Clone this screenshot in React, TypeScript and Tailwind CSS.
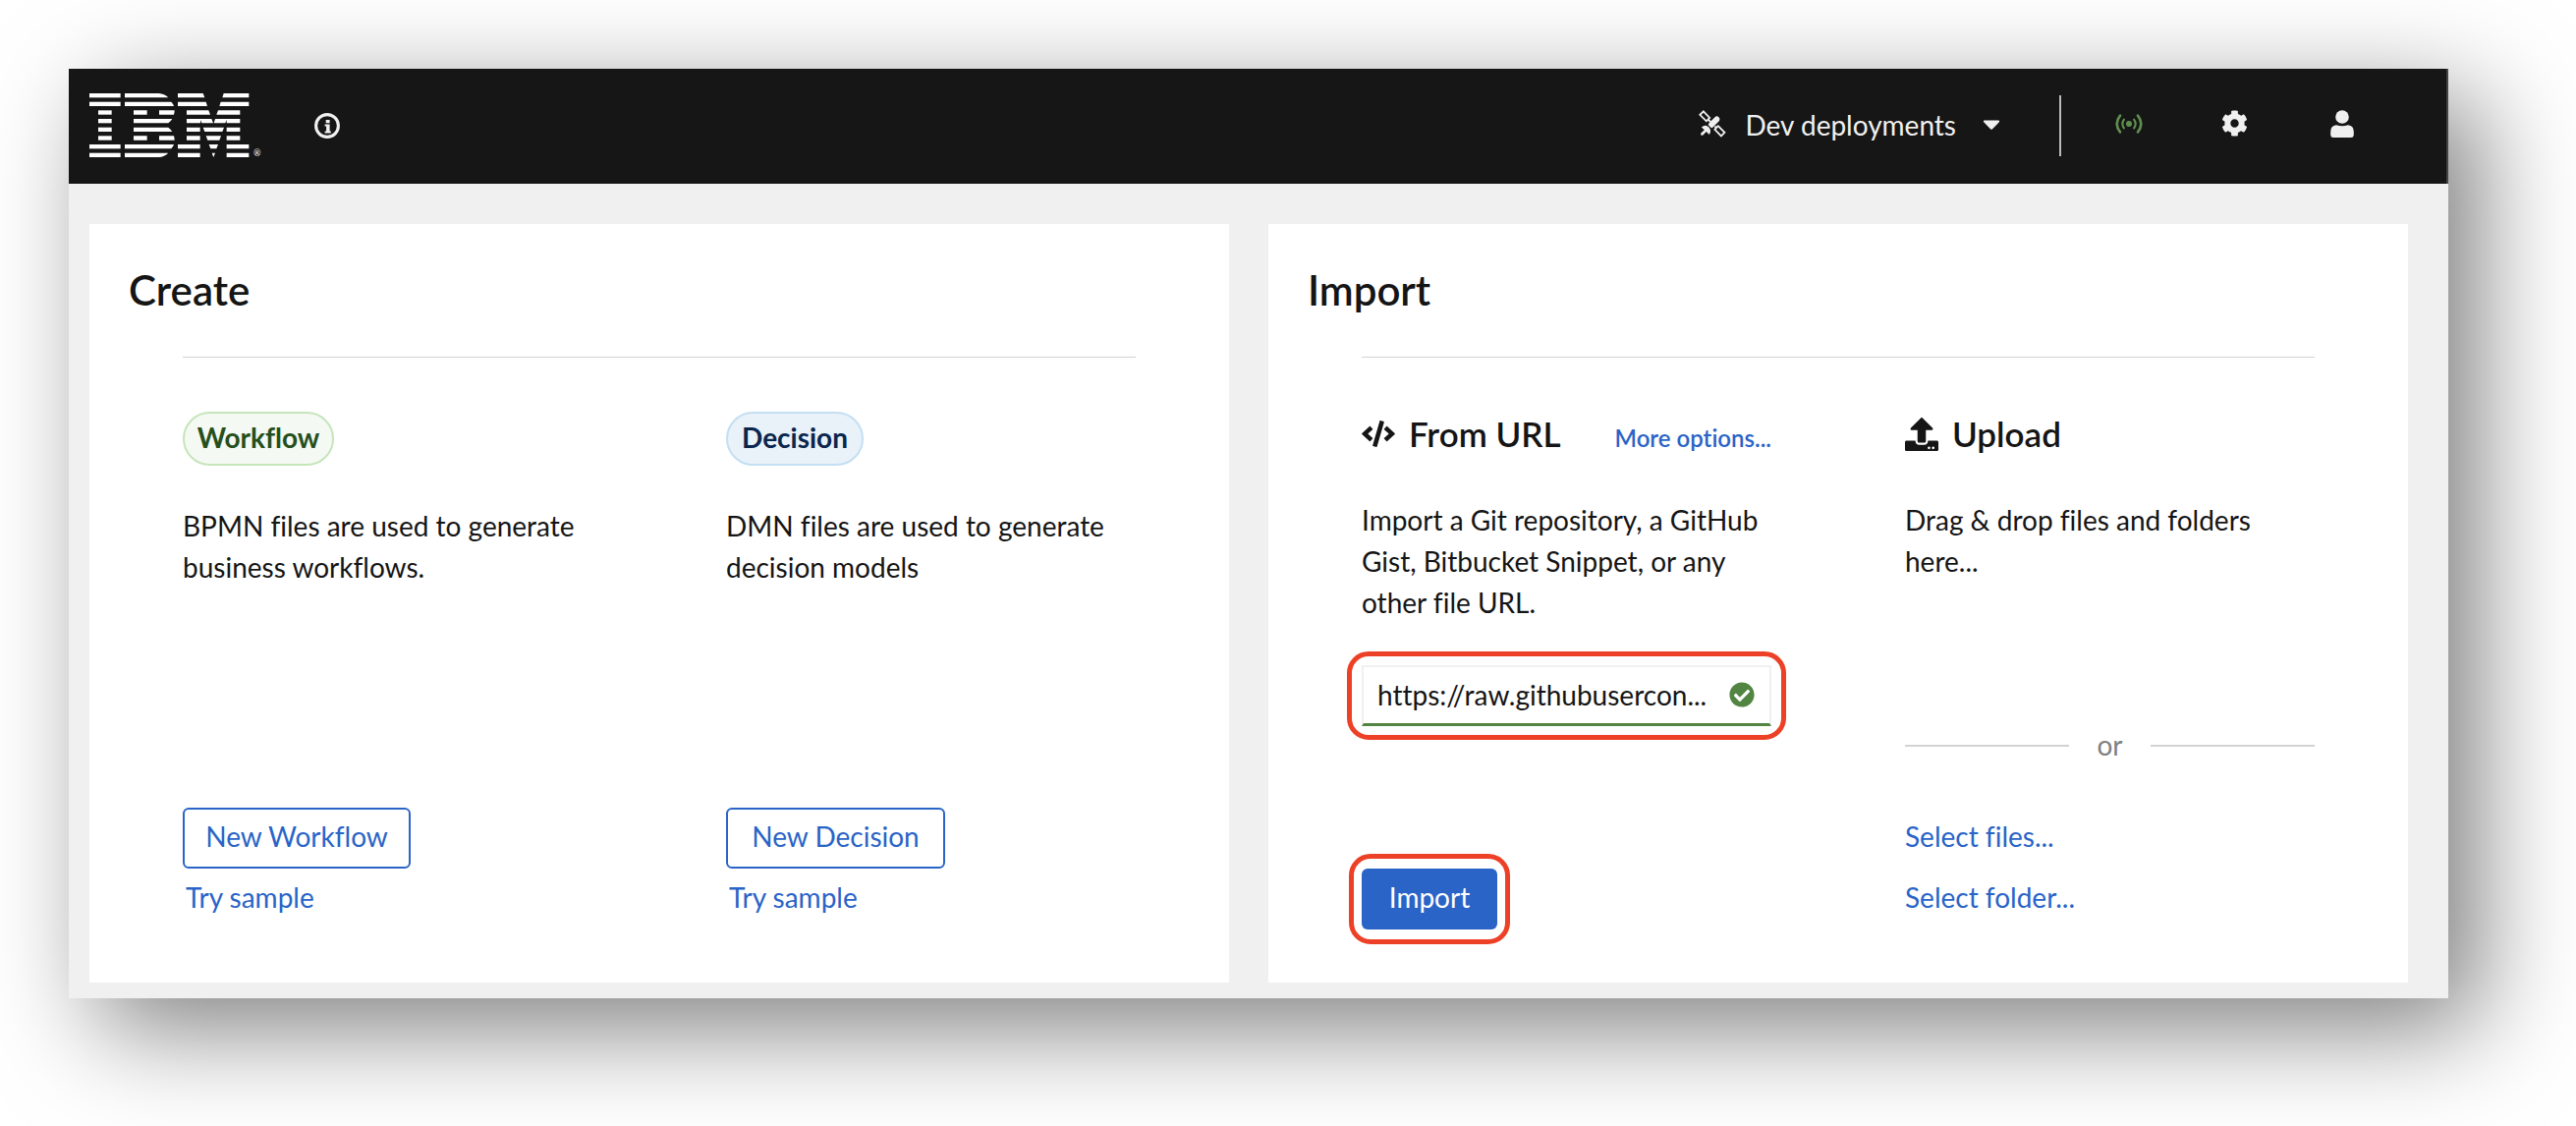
import type { ReactNode } from "react";
import { FaCaretDown, FaCheckCircle, FaCode, FaCog, FaUpload } from "react-icons/fa";

const barY = [105, 131, 157, 183, 209, 235, 261, 287];

function IbmLogo() {
  return (
    <a href="#home" aria-label="IBM home" className="flex items-end gap-1 text-white">
      <svg className="h-[65px] w-[163px]" viewBox="93 105 489 195" fill="currentColor" aria-hidden="true">
        {barY.map((y, i) =>
          i < 2 || i > 5 ? (
            <rect key={y} x="93" y={y} width="95" height="13" />
          ) : (
            <rect key={y} x="120" y={y} width="41" height="13" />
          ),
        )}
        <path d="M201 105H305Q322 106 334 118H201Z" />
        <path d="M201 131H343Q349 137 351 144H201Z" />
        <path d="M228 157H269V170H228ZM306 157H353Q353 164 351 170H306Z" />
        <path d="M228 183H346Q341 191 334 196H228Z" />
        <path d="M228 209H334Q341 214 346 222H228Z" />
        <path d="M228 235H269V248H228ZM306 235H351Q353 241 353 248H306Z" />
        <path d="M201 261H351Q349 268 343 274H201Z" />
        <path d="M201 287H334Q322 299 305 300H201Z" />
        <path d="M363 105H440L445 118H363ZM503 105H580V118H499Z" />
        <path d="M363 131H449L453 144H363ZM494 131H580V144H490Z" />
        <path d="M390 157H457L462 170H390ZM486 157H553V170H481Z" />
        <path d="M390 183H466L471 196H436L432 186V196H390ZM477 183H553V196H512V186L508 196H473Z" />
        <path d="M390 209H431V222H390ZM440 209H504L499 222H445ZM512 209H553V222H512Z" />
        <path d="M390 235H431V248H390ZM449 235H495L490 248H454ZM512 235H553V248H512Z" />
        <path d="M363 261H431V274H363ZM458 261H486L481 274H463ZM512 261H580V274H512Z" />
        <path d="M363 287H431V300H363ZM467 287H477L472 300ZM512 287H580V300H512Z" />
      </svg>
      <span className="text-[9px] leading-[9px]">®</span>
    </a>
  );
}

function InfoIcon() {
  return (
    <svg className="size-[26px]" viewBox="0 0 26 26" aria-hidden="true">
      <circle cx="13" cy="13" r="11.4" fill="none" stroke="currentColor" strokeWidth="3.1" />
      <path fill="currentColor" d="M11.7 7h3.9v3.2h-3.9zM10.6 11.6h5v6.9h1.2v2h-6.2v-2h1.5v-4.9h-1.5z" />
    </svg>
  );
}

function SatelliteIcon() {
  return (
    <svg className="size-7" viewBox="0 0 28 28" aria-hidden="true">
      <g fill="none" stroke="currentColor" strokeWidth="1.8">
        <path d="M4.9 1.3 11.2 7.9 7.8 11.3 1.3 4.8Z" />
        <path d="M19.8 16.2 26.4 22.8 22.9 26.4 16.4 19.8Z" />
        <path d="M9.5 9.5 12 12M16.5 16.5 18 18" />
      </g>
      <path fill="currentColor" d="M10.3 13.4 17 6.7Q18.6 5.6 20.5 7.2Q22.2 9 21 10.9L14.3 17.7Q13.3 18.6 12.3 17.7L10.3 15.7Q9.2 14.6 10.3 13.4Z" />
      <path fill="currentColor" d="M2.8 17.4Q7 14.3 10.4 17.4Q13.5 20.8 10.8 25L7.8 22 4.4 25.5Q3 26.2 2.1 24.9L2.3 23.6 5.9 20.2Z" />
    </svg>
  );
}

function AntennaIcon() {
  return (
    <svg className="h-5 w-7" viewBox="0 0 28 20" fill="none" stroke="currentColor" strokeLinecap="round" aria-hidden="true">
      <circle cx="14" cy="10" r="3" fill="currentColor" stroke="none" />
      <path strokeWidth="2.6" d="M5 1.6Q-1.6 10 5 18.4M23 1.6Q29.6 10 23 18.4" />
      <path strokeWidth="2.1" d="M8.9 5.6Q5.8 10 8.9 14.4M19.1 5.6Q22.2 10 19.1 14.4" />
    </svg>
  );
}

function UserIcon() {
  return (
    <svg className="h-7 w-6" viewBox="0 0 24 28" fill="currentColor" aria-hidden="true">
      <circle cx="12" cy="7" r="6.8" />
      <path d="M6 15.2Q9 16.2 12 16.2T18 15.2Q23.8 15.8 23.8 22V25.5Q23.6 28 21 28H3Q.4 28 .2 25.5V22Q.2 15.8 6 15.2Z" />
    </svg>
  );
}

function Card({ title, children }: { title: string; children: ReactNode }) {
  return (
    <section className="bg-white pt-[38px] pb-[54px]">
      <h2 className="px-10 text-[42px] leading-[58px] font-semibold">{title}</h2>
      <div className="mx-[95px] mt-[39px] grid grid-cols-2 gap-x-[136px] border-t border-[#d2d2d2] pt-[55px]">
        {children}
      </div>
    </section>
  );
}

function Column({ children }: { children: ReactNode }) {
  return <div className="flex min-h-[527px] flex-col items-start">{children}</div>;
}

function LinkButton({ children, inset = false }: { children: ReactNode; inset?: boolean }) {
  return (
    <button type="button" className={`h-[62px] pb-1 whitespace-nowrap text-[#2a64c7] ${inset ? "pl-[3px]" : ""}`}>
      {children}
    </button>
  );
}

export default function App() {
  return (
    <div className="min-h-screen overflow-hidden bg-white pt-[70px] pr-[130px] pl-[70px] font-['Lato',sans-serif] text-[28px] leading-[42px] text-[#151515] [font-variant-ligatures:none]">
      <div className="bg-[#f0f0f0] pb-4 shadow-[30px_30px_100px_rgba(0,0,0,0.51)]">
        <header className="flex h-[117px] items-center border-r-2 border-[#444444] bg-[#161616] pr-[94px] pb-0.5 pl-[21px] text-[#f0f0f0]">
          <IbmLogo />
          <button type="button" aria-label="About" className="ml-[55px]">
            <InfoIcon />
          </button>
          <button type="button" className="ml-auto flex items-center pb-1">
            <SatelliteIcon />
            <span className="mr-[22px] ml-[19px] pt-0.5">Dev deployments</span>
            <FaCaretDown className="size-7" aria-hidden="true" />
          </button>
          <span className="ml-[55px] h-[62px] w-0.5 bg-[#b8bbbe]" />
          <div className="ml-[55px] flex items-center gap-20 pb-1">
            <button type="button" aria-label="Connection status" className="text-[#5f8f4e]">
              <AntennaIcon />
            </button>
            <button type="button" aria-label="Settings" className="pr-1">
              <FaCog className="size-[27px]" aria-hidden="true" />
            </button>
            <button type="button" aria-label="Account">
              <UserIcon />
            </button>
          </div>
        </header>

        <main className="grid grid-cols-2 gap-10 pt-[41px] pr-[41px] pl-[21px]">
          <Card title="Create">
            <Column>
              <span className="flex h-[55px] w-[154px] items-center justify-center rounded-[28px] border-2 border-[#c6e5bb] bg-[#f4f9f3] pb-1 font-bold text-[#264f1c]">
                Workflow
              </span>
              <p className="mt-10 whitespace-nowrap">
                BPMN files are used to generate
                <br />
                business workflows.
              </p>
              <button type="button" className="mt-auto h-[62px] w-[232px] rounded-md border-2 border-[#2a64c7] pb-1 text-[#2a64c7]">
                New Workflow
              </button>
              <LinkButton inset>Try sample</LinkButton>
            </Column>
            <Column>
              <span className="flex h-[55px] w-[140px] items-center justify-center rounded-[28px] border-2 border-[#c4dff2] bg-[#e9f1f9] pb-1 font-bold text-[#0b264d]">
                Decision
              </span>
              <p className="mt-10 whitespace-nowrap">
                DMN files are used to generate
                <br />
                decision models
              </p>
              <button type="button" className="mt-auto h-[62px] w-[223px] rounded-md border-2 border-[#2a64c7] pb-1 text-[#2a64c7]">
                New Decision
              </button>
              <LinkButton inset>Try sample</LinkButton>
            </Column>
          </Card>

          <Card title="Import">
            <Column>
              <div className="flex h-[45px] w-full items-baseline justify-between">
                <h3 className="flex items-center gap-[14px] text-[35px] leading-[45px] font-semibold whitespace-nowrap">
                  <FaCode className="h-[27px] w-[34px]" aria-hidden="true" />
                  From URL
                </h3>
                <a href="#more-options" className="text-2xl leading-[45px] font-semibold whitespace-nowrap text-[#2a64c7]">
                  More options...
                </a>
              </div>
              <p className="mt-11 whitespace-nowrap">
                Import a Git repository, a GitHub
                <br />
                Gist, Bitbucket Snippet, or any
                <br />
                other file URL.
              </p>
              <div className="relative mt-[43px] w-full">
                <input
                  type="text"
                  aria-label="File URL"
                  defaultValue="https://raw.githubusercon..."
                  className="block h-[62px] w-full border-2 border-b-3 border-[#f0f0f0] border-b-[#528541] bg-white pr-14 pb-0.5 pl-[14px] outline-none"
                />
                <FaCheckCircle className="absolute top-[17px] right-[17px] size-[26px] text-[#528541]" aria-hidden="true" />
                <span aria-hidden="true" className="pointer-events-none absolute -inset-x-[15px] -inset-y-[14px] rounded-[22px] border-5 border-[#ec4126]" />
              </div>
              <div className="relative mt-auto">
                <button type="button" className="block h-[62px] w-[138px] rounded-md bg-[#2a64c7] pb-1 text-white">
                  Import
                </button>
                <span aria-hidden="true" className="pointer-events-none absolute -inset-x-[13px] -inset-y-[15px] rounded-[22px] border-5 border-[#ec4126]" />
              </div>
            </Column>
            <Column>
              <h3 className="flex items-center gap-[14px] text-[35px] leading-[45px] font-semibold">
                <FaUpload className="size-[34px]" aria-hidden="true" />
                Upload
              </h3>
              <p className="mt-11 whitespace-nowrap">
                Drag &amp; drop files and folders
                <br />
                here...
              </p>
              <div className="mt-auto mb-[42px] flex w-full items-center gap-7 text-[#808080]">
                <span className="h-0.5 flex-1 bg-[#d2d2d2]" />
                <span className="pb-0.5 leading-10">or</span>
                <span className="h-0.5 flex-1 bg-[#d2d2d2]" />
              </div>
              <LinkButton>Select files...</LinkButton>
              <LinkButton>Select folder...</LinkButton>
            </Column>
          </Card>
        </main>
      </div>
    </div>
  );
}
